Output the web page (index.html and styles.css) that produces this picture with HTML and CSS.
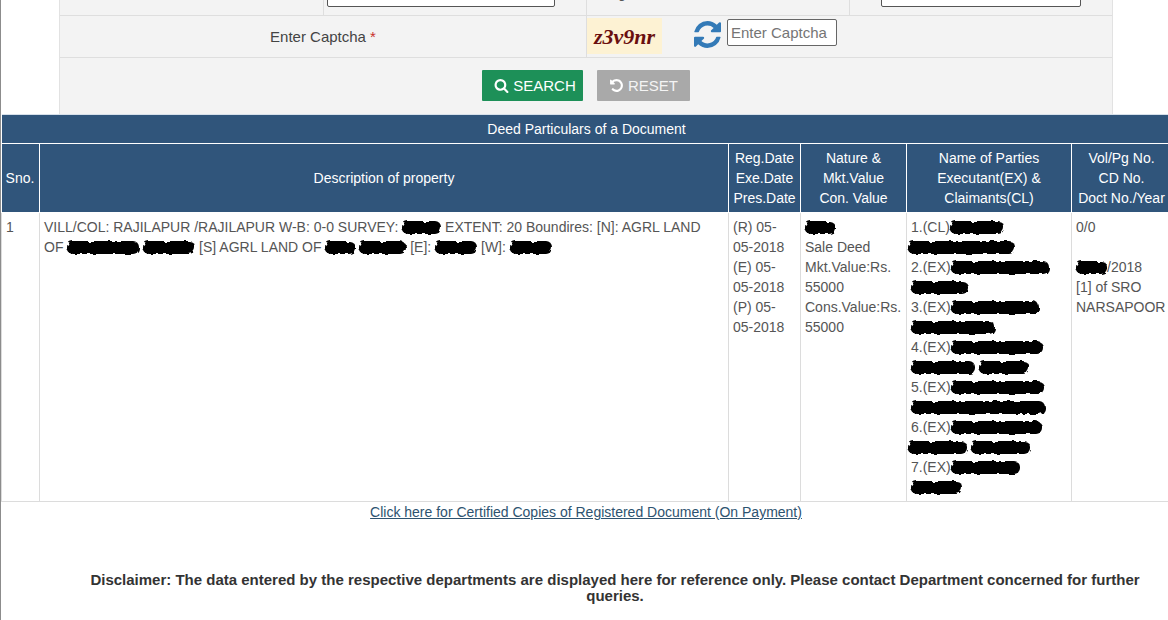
FILE: index.html
```html
<!DOCTYPE html>
<html lang="en">
<head>
<meta charset="utf-8">
<title>Deed Particulars of a Document</title>
<link rel="stylesheet" href="styles.css">
</head>
<body>
<svg class="defs" width="0" height="0" aria-hidden="true">
  <filter id="rough" x="-10%" y="-50%" width="120%" height="200%">
    <feTurbulence type="fractalNoise" baseFrequency="0.16" numOctaves="2" seed="7"/>
    <feDisplacementMap in="SourceGraphic" scale="5"/>
  </filter>
</svg>
<form class="search-form">
  <div class="row row-top">
    <div class="cell cell-1"></div>
    <div class="cell cell-2"><span class="box box-a"></span></div>
    <div class="cell cell-2 cell-cut">Reg</div>
    <div class="cell cell-4"><span class="box box-b"></span></div>
  </div>
  <div class="row row-captcha">
    <div class="label">Enter Captcha <span class="req">*</span></div>
    <div class="captcha">
      <span class="captcha-img">z3v9nr</span>
      <svg class="refresh" viewBox="128 128 1536 1536"><path d="M1639 1056q0 5-1 7-64 268-268 434.5t-478 166.5q-146 0-282.5-55t-243.5-157l-129 129q-19 19-45 19t-45-19-19-45v-448q0-26 19-45t45-19h448q26 0 45 19t19 45-19 45l-137 137q71 66 161 102t187 36q134 0 250-65t186-179q11-17 53-117 8-23 30-23h192q13 0 22.5 9.5t9.5 22.5zm25-800v448q0 26-19 45t-45 19h-448q-26 0-45-19t-19-45 19-45l138-138q-148-137-349-137-134 0-250 65t-186 179q-11 17-53 117-8 23-30 23h-199q-13 0-22.5-9.5t-9.5-22.5v-7q65-268 270-434.5t480-166.5q146 0 284 55.5t245 156.5l130-129q19-19 45-19t45 19 19 45z"/></svg>
      <input class="captcha-input" type="text" placeholder="Enter Captcha">
    </div>
  </div>
  <div class="row-buttons">
    <button class="btn btn-search" type="button"><svg class="btn-icon" viewBox="0 0 1792 1792"><path d="M1216 832q0-185-131.5-316.5t-316.5-131.5-316.5 131.5-131.5 316.5 131.5 316.5 316.5 131.5 316.5-131.5 131.5-316.5zm512 832q0 52-38 90t-90 38q-54 0-90-38l-343-342q-179 124-399 124-143 0-273.5-55.5t-225-150-150-225-55.5-273.5 55.5-273.5 150-225 225-150 273.5-55.5 273.5 55.5 225 150 150 225 55.5 273.5q0 220-124 399l343 343q37 37 37 90z"/></svg>SEARCH</button>
    <button class="btn btn-reset" type="button"><svg class="btn-icon" viewBox="0 0 1792 1792"><path d="M1664 896q0 156-61 298t-164 245-245 164-298 61q-172 0-327-72.5t-264-204.5q-7-10-6.5-22.5t8.5-20.5l137-138q10-9 25-9 16 2 23 12 73 95 179 147t225 52q104 0 198.5-40.5t163.5-109.5 109.5-163.5 40.5-198.5-40.5-198.5-109.5-163.5-163.5-109.5-198.5-40.5q-98 0-188 35.5t-160 101.5l137 138q31 30 14 69-17 40-59 40h-448q-26 0-45-19t-19-45v-448q0-42 40-59 39-17 69 14l130 129q107-101 244.5-156.5t284.5-55.5q156 0 298 61t245 164 164 245 61 298z"/></svg>RESET</button>
  </div>
</form>
<table class="deed">
  <colgroup>
    <col class="c1"><col class="c2"><col class="c3"><col class="c4"><col class="c5"><col class="c6">
  </colgroup>
  <thead>
    <tr class="title"><th colspan="6">Deed Particulars of a Document</th></tr>
    <tr class="heads">
      <th>Sno.</th>
      <th>Description of property</th>
      <th>Reg.Date<br>Exe.Date<br>Pres.Date</th>
      <th>Nature &amp;<br>Mkt.Value<br>Con. Value</th>
      <th>Name of Parties<br>Executant(EX) &amp;<br>Claimants(CL)</th>
      <th>Vol/Pg No.<br>CD No.<br>Doct No./Year</th>
    </tr>
  </thead>
  <tbody>
    <tr>
      <td>1</td>
      <td>VILL/COL: RAJILAPUR /RAJILAPUR W-B: 0-0 SURVEY: <span class="blob w39"></span> EXTENT: 20 Boundires: [N]: AGRL LAND<br>OF <span class="blob w72"></span> <span class="blob w52"></span> [S] AGRL LAND OF <span class="blob w30"></span> <span class="blob w47"></span> [E]: <span class="blob w42"></span> [W]: <span class="blob w42"></span></td>
      <td>(R) 05-<br>05-2018<br>(E) 05-<br>05-2018<br>(P) 05-<br>05-2018</td>
      <td><span class="blob w30"></span><br>Sale Deed<br>Mkt.Value:Rs.<br>55000<br>Cons.Value:Rs.<br>55000</td>
      <td class="parties">
        1.(CL)<span class="blob w54"></span><br><span class="blob w107 out"></span><br>
        2.(EX)<span class="blob w98"></span><br><span class="blob w57"></span><br>
        3.(EX)<span class="blob w88"></span><br><span class="blob w84"></span><br>
        4.(EX)<span class="blob w92"></span><br><span class="blob w64"></span> <span class="blob w50"></span><br>
        5.(EX)<span class="blob w93"></span><br><span class="blob w134"></span><br>
        6.(EX)<span class="blob w91"></span><br><span class="blob w59 out"></span> <span class="blob w59"></span><br>
        7.(EX)<span class="blob w69"></span><br><span class="blob w51"></span>
      </td>
      <td>0/0<br><br><span class="blob w31"></span>/2018<br>[1] of SRO<br>NARSAPOOR</td>
    </tr>
  </tbody>
</table>
<p class="copies"><a href="#">Click here for Certified Copies of Registered Document (On Payment)</a></p>
<p class="disclaimer">Disclaimer: The data entered by the respective departments are displayed here for reference only. Please contact Department concerned for further queries.</p>
</body>
</html>
```
FILE: styles.css
```css
* { box-sizing: border-box; }
html, body { margin: 0; padding: 0; height: 620px; overflow: hidden; }
body {
  width: 1171px;
  border-left: 1px solid #8c8c8c;
  background: #fff;
  color: #555;
  font: 14px/20px "Liberation Sans", Arial, sans-serif;
}
.defs { display: block; height: 0; }

.search-form {
  width: 1054px;
  height: 114px;
  margin-left: 58px;
  background: #f3f3f3;
  border: 1px solid #e2e2e2;
  border-top: 0;
  border-bottom: 0;
}
.row { display: flex; border-bottom: 1px solid #dedede; }
.row-top { height: 16px; }
.cell { border-right: 1px solid #dedede; overflow: hidden; }
.cell-1 { width: 264px; }
.cell-2 { width: 263px; }
.cell-4 { flex: 1; border-right: 0; }
.cell-cut { height: 36px; margin-top: -20px; padding: 3px 0 0 13px; line-height: 20px; }
.box { display: block; height: 30px; margin-top: -23px; background: #fff; border: 1px solid #555; border-radius: 2px; }
.box-a { width: 228px; margin-left: 3px; }
.box-b { width: 200px; margin-left: 31px; }

.row-captcha { height: 42px; }
.label { width: 526px; padding-top: 11px; text-align: center; color: #444; font-size: 15px; }
.req { color: #c9302c; }
.captcha { display: flex; align-items: flex-start; border-left: 1px solid #dedede; }
.captcha-img {
  width: 75px;
  height: 36px;
  margin-top: 2px;
  background: #fdf2d3;
  color: #6a0f0f;
  font: italic bold 22px/38px "Liberation Serif", serif;
  text-align: center;
}
.refresh { width: 27px; height: 27px; margin: 5px 0 0 32px; fill: #337ab7; }
.captcha-input {
  width: 110px;
  height: 27px;
  margin: 3px 0 0 6px;
  padding: 0 3px;
  border: 1px solid #666;
  border-radius: 2px;
  background: #fff;
  font: 15px "Liberation Sans", Arial, sans-serif;
  color: #555;
}
.captcha-input::placeholder { color: #757575; opacity: 1; }

.row-buttons { display: flex; justify-content: center; gap: 14px; padding-top: 12px; }
.btn {
  display: flex;
  align-items: center;
  justify-content: center;
  height: 31px;
  padding: 0;
  border: 0;
  border-radius: 1px;
  color: #fff;
  font: 15px "Liberation Sans", Arial, sans-serif;
}
.btn-icon { width: 15px; height: 15px; margin-right: 4px; fill: #fff; }
.btn-search { width: 101px; padding-left: 5px; background: #1d9058; }
.btn-reset { width: 93px; background: #a9a9a9; color: #f4f4f4; }

.deed {
  width: 1170px;
  table-layout: fixed;
  border-collapse: collapse;
  border-top: 1px solid #d6e0ea;
}
.c1 { width: 38px; }
.c2 { width: 689px; }
.c3 { width: 72px; }
.c4 { width: 106px; }
.c5 { width: 165px; }
.c6 { width: 100px; }
th, td { border: 1px solid #dcdcdc; padding: 4px; font-weight: normal; vertical-align: top; text-align: left; }
th { background: #30557b; color: #fff; border-color: #fff; text-align: center; vertical-align: middle; }
.title th { height: 29px; border: 0; border-bottom: 1px solid #fff; }
.heads th { height: 68px; padding: 4px 1px; }
.heads th:first-child { padding-left: 0; }
.deed tbody td { height: 289px; }

.blob {
  display: inline-block;
  height: 13px;
  vertical-align: -2px;
  background: #000;
  border-radius: 6px;
  filter: url(#rough);
}
.out { margin-left: -3px; }
.w30 { width: 30px; } .w31 { width: 31px; } .w39 { width: 39px; }
.w42 { width: 42px; } .w47 { width: 47px; } .w50 { width: 50px; }
.w51 { width: 51px; } .w52 { width: 52px; } .w54 { width: 54px; }
.w57 { width: 57px; } .w59 { width: 59px; } .w64 { width: 64px; }
.w69 { width: 69px; } .w72 { width: 72px; } .w84 { width: 84px; }
.w88 { width: 88px; } .w91 { width: 91px; } .w92 { width: 92px; }
.w93 { width: 93px; } .w98 { width: 98px; } .w107 { width: 107px; }
.w134 { width: 134px; }

.copies { height: 70px; margin: 0; text-align: center; }
.copies a { color: #2d5370; text-decoration: underline; }
.disclaimer {
  margin: 0;
  padding: 0 20px 0 78px;
  font-size: 15px;
  font-weight: bold;
  color: #333;
  text-align: center;
  line-height: 16px;
}
```
